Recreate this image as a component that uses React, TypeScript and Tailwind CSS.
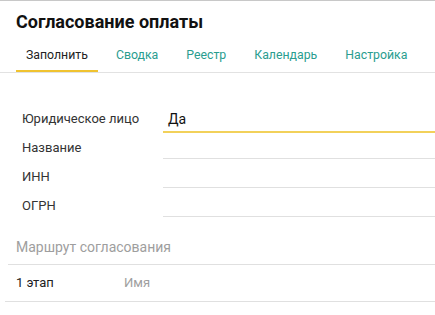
const tabs = ['Заполнить', 'Сводка', 'Реестр', 'Календарь', 'Настройка'];

const fields = [
  { label: 'Юридическое лицо', value: 'Да', h: 'h-[28px]', active: true },
  { label: 'Название', value: '', h: 'h-[26px]' },
  { label: 'ИНН', value: '', h: 'h-[29px]' },
  { label: 'ОГРН', value: '', h: 'h-[29px]' },
];

export default function App() {
  return (
    <div className="w-[435px] h-[315px] overflow-hidden bg-white border-t border-[#c8c8c8] font-['Roboto',sans-serif] text-[13px] text-[#333]">
      <header className="border-b border-[#e2e2e2]">
        <h1 className="pl-4 pt-[9px] text-[18px] leading-6 font-bold text-[#111]">Согласование оплаты</h1>
        <nav className="flex gap-2 pl-4 mt-[10px] text-[12.3px]">
          {tabs.map((t, i) => (
            <div
              key={t}
              className={
                i === 0
                  ? 'px-[10px] pt-[1px] pb-[5px] leading-5 border-b-2 border-[#f0c330] text-[#222]'
                  : 'px-[10px] pt-[1px] pb-[5px] leading-5 border-b-2 border-transparent text-[#2a9d8f]'
              }
            >
              {t}
            </div>
          ))}
        </nav>
      </header>

      <section className="mt-[32px]">
        {fields.map((f) =>
          f.active ? (
            <div key={f.label} className={`flex ${f.h}`}>
              <div className="w-[163px] pl-[22px] flex items-end pb-[4px] leading-5">{f.label}</div>
              <div className="flex-1 flex items-end pb-[2px] pl-[5px] leading-5 text-[14px] text-[#111] border-b-2 border-[#f2d15a]">
                {f.value}
              </div>
            </div>
          ) : (
            <div key={f.label} className={`flex ${f.h}`}>
              <div className="w-[163px] pl-[22px] flex items-end pb-[1px] leading-5">{f.label}</div>
              <div className="flex-1 flex items-end pl-[5px] leading-5 border-b border-[#e0e0e0]">{f.value}</div>
            </div>
          )
        )}
      </section>

      <div className="mt-[20px] ml-2">
        <div className="pl-2 pb-[7px] text-[14px] leading-5 text-[#9e9e9e] border-b border-[#e0e0e0]">
          Маршрут согласования
        </div>
      </div>
      <div className="ml-[5px] flex h-[37px] items-center border-b border-[#e0e0e0]">
        <span className="pl-[11px] w-[119px] text-[#222]">1 этап</span>
        <span className="text-[#9e9e9e]">Имя</span>
      </div>
    </div>
  );
}
